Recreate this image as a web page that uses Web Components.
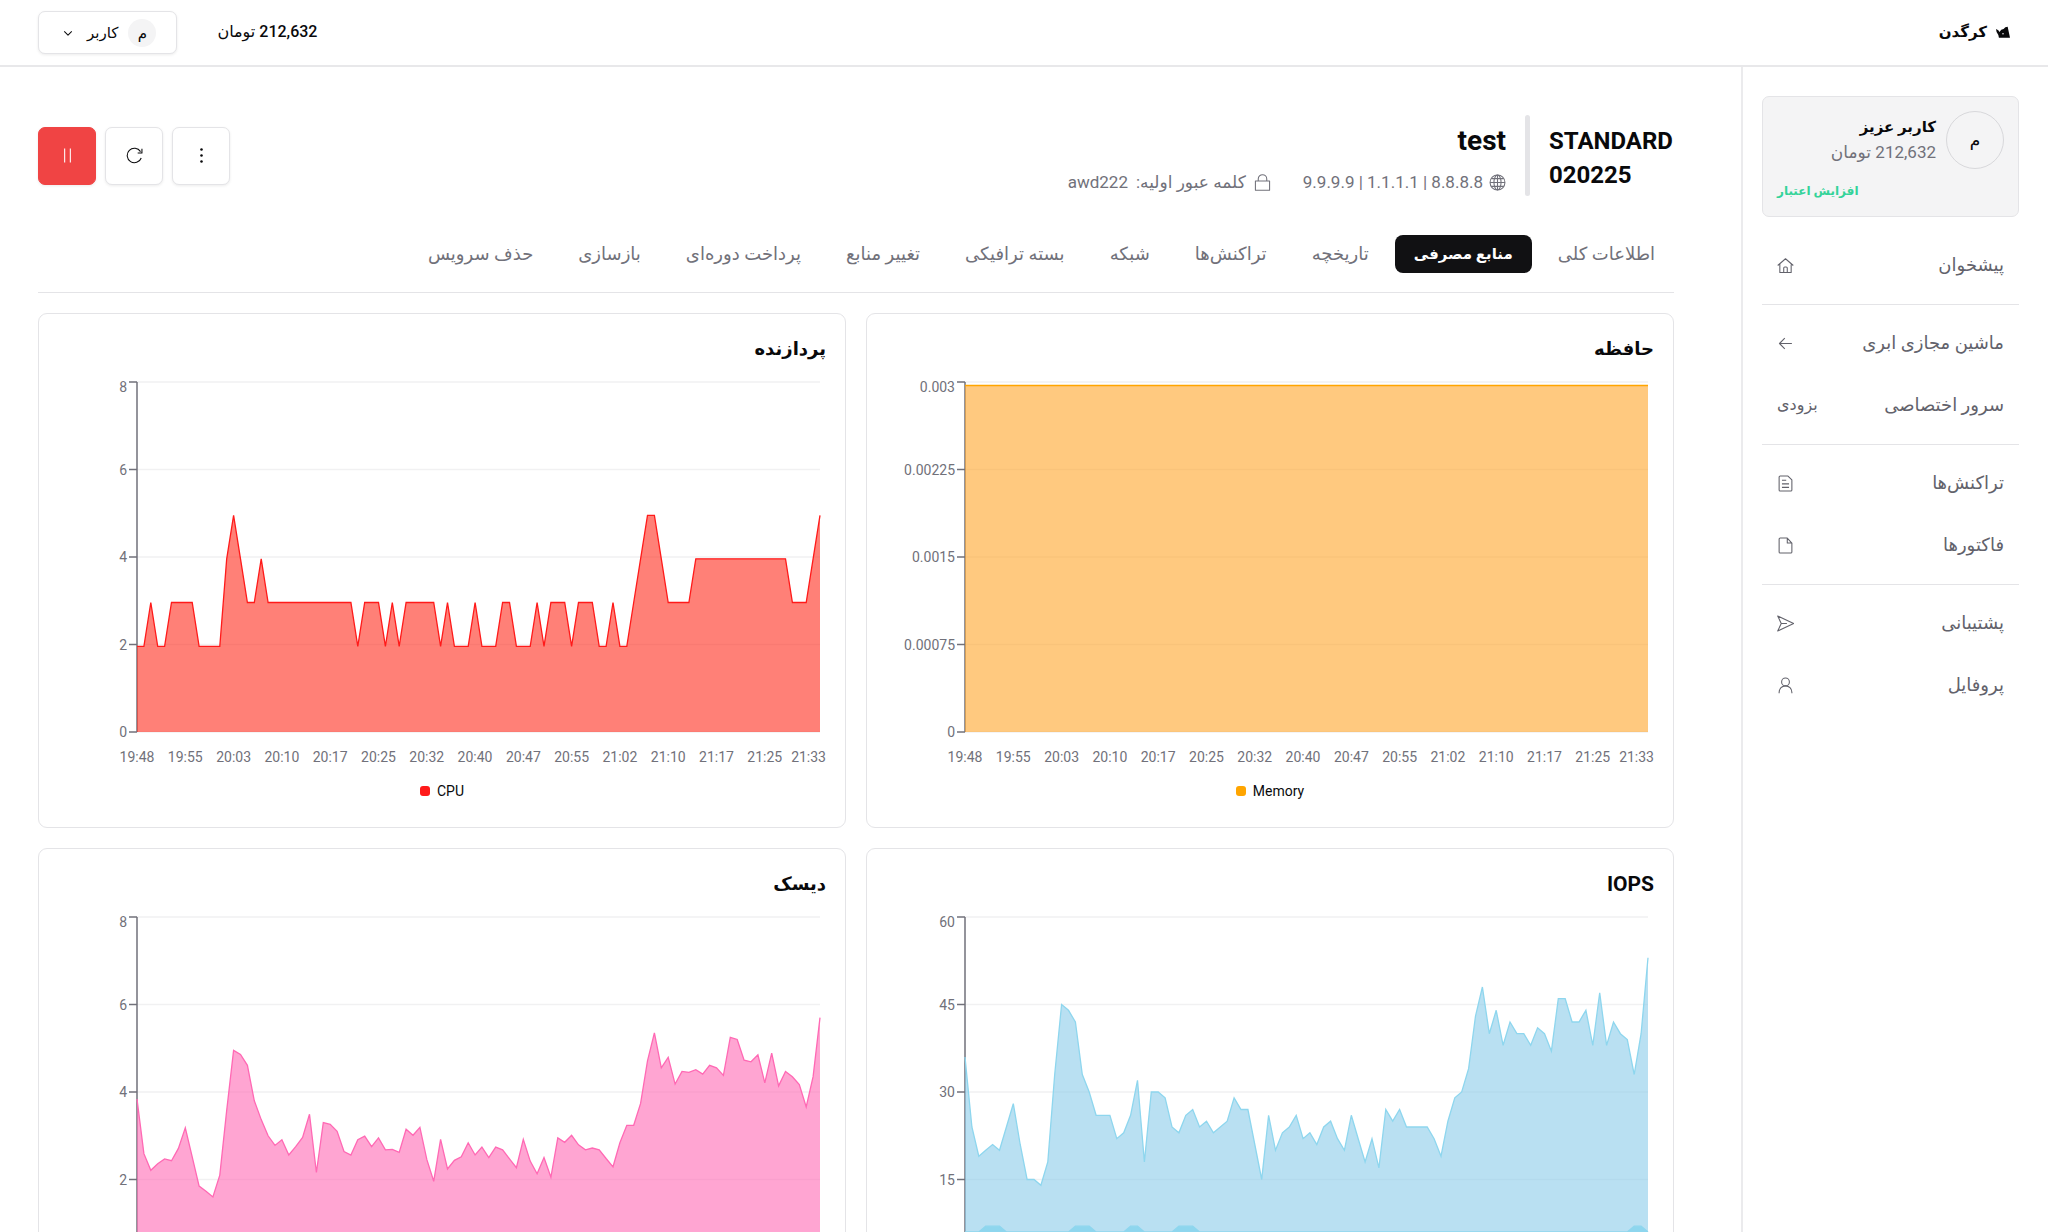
<!DOCTYPE html>
<html lang="fa" dir="rtl">
<head>
<meta charset="utf-8">
<title>کرگدن</title>
<style>
  html { scrollbar-width: none; }
  body {
    margin: 0;
    background: #fff;
    color: #09090b;
    font-family: Roboto, "DejaVu Sans", sans-serif;
    font-size: 16px;
    line-height: 24px;
  }
</style>
</head>
<body>
<panel-app></panel-app>

<script>
const ICONS = {
  home: '<path d="M1 12 12 2.500l11 9.500M4 9.500V22h16V9.500M9.500 22v-6.500a1.500 1.500 0 0 1 1.500-1.500h2a1.500 1.500 0 0 1 1.500 1.500V22"/>',
  arrow: '<path d="M21 12H3.500M11 4.500 3.500 12l7.500 7.500"/>',
  doc: '<path d="M4.500 1.500h11L21 7v14a1.500 1.500 0 0 1-1.500 1.500h-15A1.500 1.500 0 0 1 3 21V3a1.500 1.500 0 0 1 1.500-1.500zM7 7.500h6M7 12.500h10M7 17.500h10"/>',
  file: '<path d="M4.500 1.500h10L21 8.500v12.500a1.500 1.500 0 0 1-1.500 1.500h-15A1.500 1.500 0 0 1 3 21V3a1.500 1.500 0 0 1 1.500-1.500zM14.500 1.500v7h6.500"/>',
  send: '<path d="M1 1.500 23.500 12 1 22.500 6 12zM6 12h8"/>',
  user: '<circle cx="12" cy="7" r="5.500"/><path d="M3 23v-1.500a9 9 0 0 1 18 0V23"/>',
  globe: '<circle cx="12" cy="12" r="10.500"/><ellipse cx="12" cy="12" rx="5" ry="10.500"/><path d="M12 1.500v21M1.500 12h21M3.500 6.500h17M3.500 17.500h17"/>',
  lock: '<path d="M2 10h20v13H2zM6 10V7a6 6 0 0 1 12 0v3"/>',
  chevron: '<path d="m3 8 9 9 9-9" stroke-width="2.500"/>',
  refresh: '<path d="M21.500 15.500A10.200 10.200 0 1 1 20.500 6.500M22.500 2.500v6h-6"/>',
  dots: '<g fill="currentColor" stroke="none"><circle cx="12" cy="3.500" r="1.800"/><circle cx="12" cy="12" r="1.800"/><circle cx="12" cy="20.500" r="1.800"/></g>',
  pause: '<path d="M8 2v20M16 2v20"/>',
  logo: '<path fill="currentColor" stroke="none" d="M0 7l4 2 2 3 3-4 4-1 3-3 4-1 4 19H5l-1-5-3-5z"/><circle cx="12" cy="15" r="1.300" fill="#fff" stroke="none"/>'
};

const define = (name, html, setup) => {
  const template = document.createElement('template');
  template.innerHTML = html;
  customElements.define(name, class extends HTMLElement {
    connectedCallback() {
      if (this.shadowRoot) return;
      this.attachShadow({ mode: 'open' }).append(template.content.cloneNode(true));
      if (setup) setup(this, this.shadowRoot);
    }
  });
};

define('ui-icon', `
  <style>
    :host { display: inline-flex; flex: none; width: 17px; height: 17px; }
    div { display: contents; }
    svg { width: 100%; height: 100%; fill: none; stroke: currentColor; stroke-width: 1.5; stroke-linejoin: round; }
  </style>
  <div></div>`, (el, root) => {
  root.querySelector('div').innerHTML =
    `<svg viewBox="0 0 24 24" aria-hidden="true">${ICONS[el.getAttribute('name')]}</svg>`;
});

define('app-header', `
  <style>
    :host { display: flex; justify-content: space-between; align-items: center; height: 65px;
            padding: 0 38px; border-bottom: 2px solid #e8e8ea; }
    .brand { display: flex; align-items: center; gap: 9px; color: inherit; text-decoration: none;
             font-weight: 700; font-size: 15px; line-height: 22px; padding-bottom: 2px; }
    .brand ui-icon { width: 14px; height: 14px; }
    .end { display: flex; align-items: center; gap: 40px; }
    .credit { font-size: 16px; line-height: 22px; padding-bottom: 2px; font-weight: 500; }
    button { display: flex; align-items: center; gap: 10px; height: 43px; padding: 0 20px; font: inherit;
             font-weight: 500; font-size: 15px; color: inherit; background: #fff; border: 1px solid #e4e4e7; border-radius: 7px;
             box-shadow: 0 1px 3px rgba(0,0,0,.08); }
    .avatar { width: 28px; height: 28px; line-height: 28px; border-radius: 50%; background: #f4f4f5; text-align: center; }
    button ui-icon { width: 10px; height: 10px; margin: 0 4px; }
  </style>
  <a class="brand" href="#"><ui-icon name="logo"></ui-icon><span>کرگدن</span></a>
  <div class="end">
    <span class="credit">212,632 تومان</span>
    <button type="button"><span class="avatar">م</span><span>کاربر</span><ui-icon name="chevron"></ui-icon></button>
  </div>`);

define('account-card', `
  <style>
    :host { display: flex; flex-direction: column; gap: 12px; padding: 14px; background: #f4f4f5;
            border: 1px solid #e4e4e7; border-radius: 7px; }
    .top { display: flex; gap: 10px; }
    .avatar { width: 56px; height: 56px; line-height: 56px; border: 1px solid #d8d8db; border-radius: 50%; text-align: center; font-size: 17px; }
    .who { display: flex; flex-direction: column; padding-top: 4px; }
    .name { font-weight: 700; font-size: 15px; line-height: 25px; }
    .credit { color: #71717a; font-size: 17px; line-height: 25px; }
    a { align-self: flex-end; font-size: 12px; line-height: 21px; font-weight: 700; color: #34d399; text-decoration: none; }
  </style>
  <div class="top">
    <div class="avatar">م</div>
    <div class="who"><span class="name">کاربر عزیز</span><span class="credit">212,632 تومان</span></div>
  </div>
  <a href="#">افزایش اعتبار</a>`);

define('nav-item', `
  <style>
    :host { display: block; }
    a { display: flex; justify-content: space-between; align-items: center; height: 62px; padding: 0 15px;
        color: #62626b; font-size: 18px; text-decoration: none; }
    .note { font-size: 16px; }
  </style>
  <a href="#"><slot></slot></a>`, (el, root) => {
  const a = root.querySelector('a');
  if (el.hasAttribute('note')) {
    const note = document.createElement('span');
    note.className = 'note';
    note.textContent = el.getAttribute('note');
    a.append(note);
  } else {
    const icon = document.createElement('ui-icon');
    icon.setAttribute('name', el.getAttribute('icon'));
    a.append(icon);
  }
});

define('nav-group', `
  <style>
    :host { display: block; padding: 7px 0 8px; border-top: 1px solid #e4e4e7; }
    :host([first]) { border-top-color: transparent; }
  </style>
  <slot></slot>`);

define('side-bar', `
  <style>
    :host { display: block; flex: none; box-sizing: border-box; width: 307px; padding: 29px 29px 30px 19px;
            border-inline-end: 2px solid #ebebed; }
    nav { margin-top: 9px; }
  </style>
  <account-card></account-card>
  <nav>
    <nav-group first><nav-item icon="home">پیشخوان</nav-item></nav-group>
    <nav-group>
      <nav-item icon="arrow">ماشین مجازی ابری</nav-item>
      <nav-item note="بزودی">سرور اختصاصی</nav-item>
    </nav-group>
    <nav-group>
      <nav-item icon="doc">تراکنش‌ها</nav-item>
      <nav-item icon="file">فاکتورها</nav-item>
    </nav-group>
    <nav-group>
      <nav-item icon="send">پشتیبانی</nav-item>
      <nav-item icon="user">پروفایل</nav-item>
    </nav-group>
  </nav>`);

define('server-heading', `
  <style>
    :host { display: flex; align-items: center; justify-content: space-between; }
    .info { display: flex; align-items: center; }
    .plan { width: 125px; padding-top: 4px; direction: ltr; text-align: left; font-size: 24px; line-height: 34px; font-weight: 700; }
    .rule { width: 5px; height: 81px; margin: 0 19px; border-radius: 3px; background: #e4e4e7; }
    .detail { display: flex; flex-direction: column; gap: 10px; padding-top: 9px; }
    h1 { margin: 0; font-size: 28px; line-height: 34px; font-weight: 700; }
    .meta { display: flex; gap: 32px; color: #71717a; font-size: 17px; line-height: 28px; }
    .meta > span { display: flex; align-items: center; gap: 6px; }
    .meta .pass { gap: 8px; }
    .actions { display: flex; gap: 9px; }
    button { display: flex; align-items: center; justify-content: center; width: 58px; height: 58px; padding: 0;
             color: #09090b; background: #fff; border: 1px solid #e4e4e7; border-radius: 7px; box-shadow: 0 1px 3px rgba(0,0,0,.08); }
    .danger { color: #fff; background: #f04444; border-color: #f04444; }
  </style>
  <div class="info">
    <div class="plan">STANDARD 020225</div>
    <div class="rule"></div>
    <div class="detail">
      <h1>test</h1>
      <div class="meta">
        <span><ui-icon name="globe"></ui-icon><span>8.8.8.8 | 1.1.1.1 | 9.9.9.9</span></span>
        <span class="pass"><ui-icon name="lock"></ui-icon><span>کلمه عبور اولیه:</span><span>awd222</span></span>
      </div>
    </div>
  </div>
  <div class="actions">
    <button type="button" aria-label="بیشتر"><ui-icon name="dots"></ui-icon></button>
    <button type="button" aria-label="راه‌اندازی مجدد"><ui-icon name="refresh"></ui-icon></button>
    <button type="button" class="danger" aria-label="توقف"><ui-icon name="pause"></ui-icon></button>
  </div>`);

define('tab-bar', `
  <style>
    :host { display: block; padding-bottom: 19px; border-bottom: 1px solid #e4e4e7; }
    nav { display: flex; gap: 7px; }
    ::slotted(a) { padding: 0 19px; height: 38px; line-height: 38px; border-radius: 8px; color: #71717a;
                   font-size: 18px; text-decoration: none; white-space: nowrap; }
    ::slotted(a[aria-current]) { background: #111113; color: #fff; font-size: 15px; font-weight: 700; }
  </style>
  <nav><slot></slot></nav>`);

const spread = runs => runs.flatMap(([v, n]) => Array(n).fill(v));
const CPU = spread([[1.96,2],[2.96,1],[1.96,2],[2.96,4],[1.96,4],[3.96,1],[4.95,1],[3.96,1],[2.96,2],[3.96,1],[2.96,13],
  [1.96,1],[2.96,3],[1.96,1],[2.96,1],[1.96,1],[2.96,5],[1.96,1],[2.96,1],[1.96,3],[2.96,1],[1.96,3],[2.96,2],[1.96,3],
  [2.96,1],[1.96,1],[2.96,3],[1.96,1],[2.96,3],[1.96,2],[2.96,1],[1.96,2],[2.96,1],[3.96,1],[4.95,2],[3.96,1],[2.96,4],
  [3.96,14],[2.96,3],[3.96,1],[4.95,1]]);
const DISK = [3.84,2.59,2.21,2.36,2.47,2.43,2.71,3.18,2.52,1.85,1.73,1.6,2.1,3.58,4.95,4.86,4.61,3.8,3.37,3,2.78,2.91,2.56,
  2.75,2.96,3.49,2.16,3.3,3.26,3.1,2.64,2.56,2.91,2.99,2.75,2.95,2.68,2.69,2.62,3.15,3.01,3.19,2.46,1.96,2.92,2.24,2.44,
  2.52,2.84,2.56,2.74,2.5,2.74,2.68,2.47,2.27,2.92,2.42,2.13,2.5,2.05,2.95,2.85,3.01,2.79,2.68,2.72,2.68,2.48,2.29,2.84,
  3.24,3.24,3.74,4.71,5.35,4.55,4.79,4.18,4.47,4.45,4.51,4.41,4.61,4.55,4.38,5.25,5.2,4.73,4.69,4.85,4.21,4.89,4.14,4.47,
  4.35,4.17,3.66,4.35,5.7];
const READS = [36,24,19,20,21,20,24,28,21,15,15,14,18,33,45,44,42,33,30,26,26,26,22,23,26,32,18,30,30,29,24,23,26,27,24,25,
  23,24,25,29,27,27,21,15,26,20,23,24,26,22,23,21,24,25,22,20,26,22,18,22,17,27,25,27,24,24,24,24,22,19,25,29,30,34,43,48,
  40,44,38,42,40,40,38,41,40,37,46,46,42,42,44,38,47,38,42,40,39,33,40,53];
const WRITES = spread([[6,3],[7,3],[6,10],[7,3],[6,5],[7,2],[6,5],[7,3],[6,63],[7,2],[6,1]]);

const CHARTS = {
  memory: { ticks: ['0', '0.00075', '0.0015', '0.00225', '0.003'], max: 0.003,
    series: [{ label: 'Memory', data: Array(100).fill(0.00297), stroke: '#ffa500', fill: '#ffa52a', opacity: .6 }] },
  cpu: { ticks: ['0', '2', '4', '6', '8'], max: 8,
    series: [{ label: 'CPU', data: CPU, stroke: '#ff1a1a', fill: '#ff2b1c', opacity: .6 }] },
  iops: { ticks: ['0', '15', '30', '45', '60'], max: 60,
    series: [{ label: 'Read', data: READS, stroke: '#8ed6ee', fill: '#8accea', opacity: .6 },
             { label: 'Write', data: WRITES, stroke: '#8ed6ee', fill: '#8ed6ee', opacity: 1 }] },
  disk: { ticks: ['0', '2', '4', '6', '8'], max: 8,
    series: [{ label: 'Disk', data: DISK, stroke: '#ff69b4', fill: '#ff69b4', opacity: .6 }] }
};
const TIMES = ['19:48','19:55','20:03','20:10','20:17','20:25','20:32','20:40','20:47','20:55','21:02','21:10','21:17','21:25'];

define('area-chart', `
  <style>
    :host { display: block; direction: ltr; }
    svg { display: block; width: 100%; height: 388px; overflow: visible; font-size: 14px; fill: #71717a; }
    .grid { stroke: #f1f1f2; stroke-width: 1.5; }
    .axis { stroke: #71717a; stroke-width: 1.5; fill: none; }
    .line { fill: none; stroke-width: 1.3; }
    .legend { display: flex; justify-content: center; gap: 16px; margin-top: 18px; font-size: 14px; line-height: 20px; }
    .legend span { display: flex; align-items: center; gap: 7px; }
    i { width: 10px; height: 10px; border-radius: 3px; }
  </style>
  <svg role="img"></svg>
  <div class="legend"></div>`, (el, root) => {
  const chart = CHARTS[el.getAttribute('data')];
  const svg = root.querySelector('svg');
  const top = 7, height = 350, left = 79;
  root.querySelector('.legend').innerHTML =
    chart.series.map(s => `<span><i style="background:${s.stroke}"></i>${s.label}</span>`).join('');
  const draw = () => {
    const full = svg.getBoundingClientRect().width;
    const width = Math.max(full - left - 6, 10);
    const y = v => top + height - v / chart.max * height;
    let out = '';
    chart.ticks.forEach((t, i) => {
      const ty = top + height - i * height / 4;
      out += `<path class="grid" d="M${left} ${ty}H${left + width}"/>`;
    });
    out += `<path class="axis" d="M${left} ${top}V${top + height}"/>`;
    chart.ticks.forEach((t, i) => {
      const ty = top + height - i * height / 4;
      out += `<path class="axis" d="M${left - 8} ${ty}H${left}"/>`;
      out += `<text x="${left - 10}" y="${ty + (i === 4 ? 10 : 5)}" text-anchor="end">${t}</text>`;
    });
    chart.series.forEach(s => {
      const pts = s.data.map((v, i) => `${(left + i * width / 99).toFixed(1)} ${y(v).toFixed(1)}`).join('L');
      out += `<path d="M${pts}V${top + height}H${left}Z" fill="${s.fill}" fill-opacity="${s.opacity}"/>`;
      out += `<path class="line" d="M${pts}" stroke="${s.stroke}"/>`;
    });
    TIMES.forEach((t, i) => {
      out += `<text x="${left + i * 7 * width / 99}" y="387" text-anchor="middle">${t}</text>`;
    });
    out += `<text x="${full}" y="387" text-anchor="end">21:33</text>`;
    svg.innerHTML = out;
  };
  draw();
  new ResizeObserver(draw).observe(svg);
});

define('chart-card', `
  <style>
    :host { display: block; box-sizing: border-box; min-width: 0; padding: 19px 19px 26px; border: 1px solid #e4e4e7; border-radius: 9px; }
    h2 { margin: 0 0 10px; font-size: 18px; line-height: 32px; font-weight: 700; }
    :host([latin]) h2 { font-size: 21px; }
  </style>
  <h2><slot></slot></h2>`, (el, root) => {
  const chart = document.createElement('area-chart');
  chart.setAttribute('data', el.getAttribute('data'));
  root.append(chart);
});

define('panel-app', `
  <style>
    :host { display: flex; flex-direction: column; min-height: 100vh; }
    .body { display: flex; flex: 1; }
    main { flex: 1; min-width: 0; padding: 48px 67px 38px 38px; }
    tab-bar { margin-top: 39px; }
    .charts { display: grid; grid-template-columns: repeat(2, minmax(0, 1fr)); gap: 20px; margin-top: 20px; }
  </style>
  <app-header></app-header>
  <div class="body">
    <side-bar></side-bar>
    <main>
      <server-heading></server-heading>
      <tab-bar>
        <a href="#">اطلاعات کلی</a>
        <a href="#" aria-current="page">منابع مصرفی</a>
        <a href="#">تاریخچه</a>
        <a href="#">تراکنش‌ها</a>
        <a href="#">شبکه</a>
        <a href="#">بسته ترافیکی</a>
        <a href="#">تغییر منابع</a>
        <a href="#">پرداخت دوره‌ای</a>
        <a href="#">بازسازی</a>
        <a href="#">حذف سرویس</a>
      </tab-bar>
      <div class="charts">
        <chart-card data="memory">حافظه</chart-card>
        <chart-card data="cpu">پردازنده</chart-card>
        <chart-card data="iops" latin>IOPS</chart-card>
        <chart-card data="disk">دیسک</chart-card>
      </div>
    </main>
  </div>`);
</script>
</body>
</html>
